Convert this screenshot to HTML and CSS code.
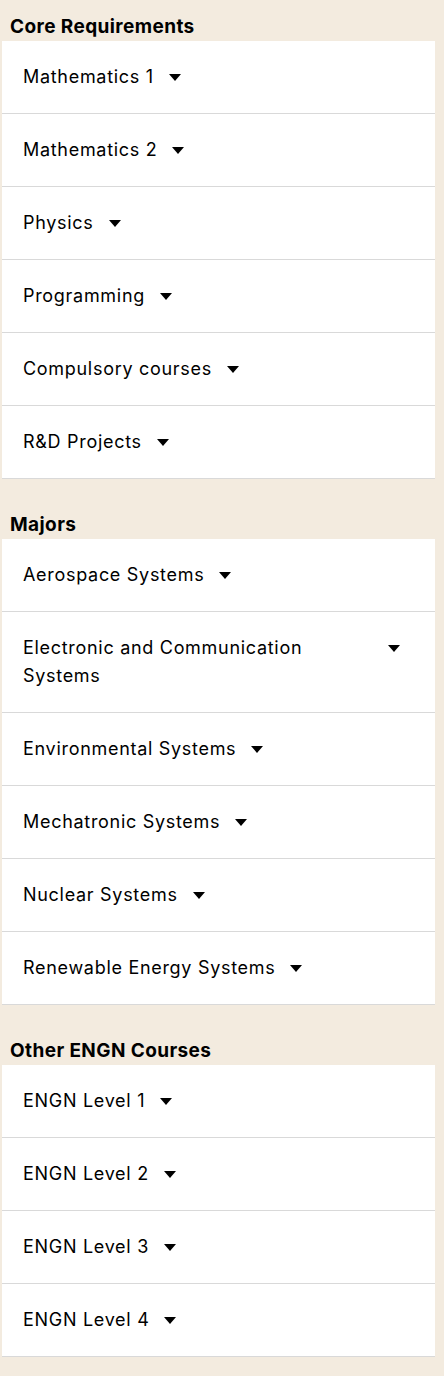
FILE: index.html
```html
<!DOCTYPE html>
<html lang="en">
<head>
<meta charset="utf-8">
<title>Courses</title>
<link rel="stylesheet" href="styles.css">
</head>
<body>
<main class="page">
  <section class="group">
    <h2 class="group-title">Core Requirements</h2>
    <ul class="list">
      <li class="item"><span class="label">Mathematics 1</span><span class="caret"></span></li>
      <li class="item"><span class="label">Mathematics 2</span><span class="caret"></span></li>
      <li class="item"><span class="label">Physics</span><span class="caret"></span></li>
      <li class="item"><span class="label">Programming</span><span class="caret"></span></li>
      <li class="item"><span class="label">Compulsory courses</span><span class="caret"></span></li>
      <li class="item"><span class="label">R&amp;D Projects</span><span class="caret"></span></li>
    </ul>
  </section>
  <section class="group">
    <h2 class="group-title">Majors</h2>
    <ul class="list">
      <li class="item"><span class="label">Aerospace Systems</span><span class="caret"></span></li>
      <li class="item"><span class="label">Electronic and Communication Systems</span><span class="caret"></span></li>
      <li class="item"><span class="label">Environmental Systems</span><span class="caret"></span></li>
      <li class="item"><span class="label">Mechatronic Systems</span><span class="caret"></span></li>
      <li class="item"><span class="label">Nuclear Systems</span><span class="caret"></span></li>
      <li class="item"><span class="label">Renewable Energy Systems</span><span class="caret"></span></li>
    </ul>
  </section>
  <section class="group">
    <h2 class="group-title">Other ENGN Courses</h2>
    <ul class="list">
      <li class="item"><span class="label">ENGN Level 1</span><span class="caret"></span></li>
      <li class="item"><span class="label">ENGN Level 2</span><span class="caret"></span></li>
      <li class="item"><span class="label">ENGN Level 3</span><span class="caret"></span></li>
      <li class="item"><span class="label">ENGN Level 4</span><span class="caret"></span></li>
    </ul>
  </section>
</main>
</body>
</html>
```
FILE: styles.css
```css
html, body {
  margin: 0;
  padding: 0;
  background: #f3ebdf;
}
body {
  font-family: Inter, "Liberation Sans", sans-serif;
  color: #000;
}
.page {
  display: flex;
  flex-direction: column;
  gap: 19px;
  padding: 0 9px 0 2px;
}
.group {
  display: flex;
  flex-direction: column;
}
.group-title {
  margin: 0;
  padding: 15px 0 2px 8px;
  font-size: 19px;
  line-height: 24px;
  font-weight: 700;
  letter-spacing: 0.4px;
}
.list {
  list-style: none;
  margin: 0;
  padding: 0;
  background: #fff;
}
.item {
  display: flex;
  align-items: flex-start;
  padding: 22px 35px 22px 21px;
  border-bottom: 1px solid #d9d9d9;
  font-size: 18px;
  line-height: 28px;
  letter-spacing: 0.7px;
}
.label {
  min-width: 0;
}
.caret {
  flex: none;
  width: 0;
  height: 0;
  margin: 11px 0 0 15px;
  border-left: 6px solid transparent;
  border-right: 6px solid transparent;
  border-top: 7px solid #000;
}
```
